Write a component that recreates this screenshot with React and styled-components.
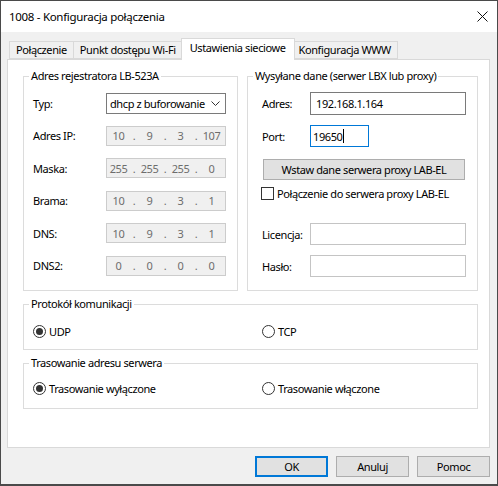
import React from "react";
import styled, { createGlobalStyle } from "styled-components";

const GlobalStyle = createGlobalStyle`
  html, body { margin: 0; padding: 0; background: #ffffff; }
  body {
    font-family: "Noto Sans", "Segoe UI", "Liberation Sans", sans-serif;
    font-size: 11px;
    letter-spacing: -0.4px;
    color: #000;
  }
  * { box-sizing: border-box; }
`;

const Window = styled.div`
  width: 498px;
  height: 486px;
  border: 1px solid #4a4a4a;
  border-bottom-width: 2px;
  background: #f0f0f0;
  display: flex;
  flex-direction: column;
`;

const TitleBar = styled.div`
  height: 31px;
  flex: none;
  background: #ffffff;
  display: flex;
  align-items: center;
  justify-content: space-between;
  padding: 0 9px 0 8px;
  font-size: 11.5px;
  letter-spacing: -0.3px;
`;

const Body = styled.div`
  flex: 1;
  display: flex;
  flex-direction: column;
  padding: 6px 7px 0 6px;
`;

const TabStrip = styled.div`
  display: flex;
  align-items: flex-end;
  height: 21px;
  padding-left: 2px;
  position: relative;
  z-index: 1;
`;

const Tab = styled.div`
  height: ${(p) => (p.$active ? "22px" : "18px")};
  margin: ${(p) => (p.$active ? "0 -2px -1px -2px" : "0 0 0 -1px")};
  padding: ${(p) => (p.$active ? "2px 8px 0 8px" : "1px 6px 0 6px")};
  background: ${(p) => (p.$active ? "#ffffff" : "#f0f0f0")};
  border: 1px solid #d9d9d9;
  border-bottom: ${(p) => (p.$active ? "none" : "1px solid #d9d9d9")};
  position: relative;
  z-index: ${(p) => (p.$active ? 2 : 0)};
  white-space: nowrap;
  line-height: 14px;
  &:first-child { margin-left: 0; }
`;

const Panel = styled.div`
  height: 389px;
  flex: none;
  background: #ffffff;
  border: 1px solid #d9d9d9;
  padding: 9px 11px 0 15px;
  display: flex;
  flex-direction: column;
  gap: 6px;
`;

const TopGrid = styled.div`
  display: grid;
  grid-template-columns: 215px 231px;
  column-gap: 9px;
`;

const Group = styled.fieldset`
  margin: 0;
  padding: 0;
  min-width: 0;
  border: 1px solid #dcdcdc;
  height: ${(p) => p.$h}px;
`;

const Legend = styled.legend`
  margin-left: 5px;
  padding: 0 2px;
  line-height: 14px;
  height: 14px;
`;

const GroupInner = styled.div`
  padding: ${(p) => p.$pt}px 0 0 ${(p) => p.$pl}px;
`;

const FieldRow = styled.div`
  display: grid;
  grid-template-columns: ${(p) => p.$label}px auto;
  align-items: center;
  height: ${(p) => p.$h}px;
  margin-bottom: ${(p) => p.$mb || 0}px;
  margin-top: ${(p) => p.$mt || 0}px;
`;

const Label = styled.span`
  white-space: nowrap;
`;

const Select = styled.div`
  width: 120px;
  height: 21px;
  border: 1px solid #7a7a7a;
  background: #fff;
  display: flex;
  align-items: center;
  padding: 0 5px 0 3px;
  justify-content: space-between;
`;

const SelectText = styled.span`
  width: 96px;
  overflow: hidden;
  white-space: nowrap;
`;

const IpField = styled.div`
  width: 120px;
  height: 20px;
  border: 1px solid #cccccc;
  background: #f0f0f0;
  color: #6d6d6d;
  display: flex;
  align-items: center;
  padding-left: 0;
`;

const IpSeg = styled.span`
  width: 23px;
  text-align: center;
`;

const IpDot = styled.span`
  width: 8px;
  text-align: center;
`;

const TextBox = styled.div`
  width: ${(p) => p.$w}px;
  height: ${(p) => p.$h}px;
  border: 1px solid ${(p) => p.$border};
  background: #fff;
  display: flex;
  align-items: center;
  padding-left: ${(p) => p.$pl || 3}px;
  white-space: nowrap;
`;

const Caret = styled.span`
  display: inline-block;
  width: 1px;
  height: 14px;
  background: #000;
  margin-left: 1px;
`;

const PushButton = styled.div`
  width: ${(p) => p.$w}px;
  height: 21px;
  background: #e1e1e1;
  border: 1px solid ${(p) => (p.$default ? "#0078d7" : "#adadad")};
  box-shadow: ${(p) => (p.$default ? "inset 0 0 0 1px #0078d7" : "none")};
  display: flex;
  align-items: center;
  justify-content: center;
  margin-left: ${(p) => p.$ml || 0}px;
  margin-top: ${(p) => p.$mt || 0}px;
  white-space: nowrap;
`;

const CheckRow = styled.div`
  display: flex;
  align-items: center;
  gap: 3px;
  height: 13px;
  margin-top: ${(p) => p.$mt}px;
  margin-left: -1px;
`;

const CheckBox = styled.span`
  width: 13px;
  height: 13px;
  border: 1px solid #333333;
  background: #fff;
  flex: none;
`;

const RadioRow = styled.div`
  display: grid;
  grid-template-columns: 229px auto;
  height: 13px;
  align-items: center;
`;

const RadioItem = styled.div`
  display: flex;
  align-items: center;
  gap: 3px;
`;

const RadioCircle = styled.span`
  width: 13px;
  height: 13px;
  border-radius: 50%;
  border: 1px solid #333333;
  background: #fff;
  display: flex;
  align-items: center;
  justify-content: center;
  flex: none;
  &::after {
    content: "";
    width: 7px;
    height: 7px;
    border-radius: 50%;
    background: ${(p) => (p.$checked ? "#333333" : "transparent")};
  }
`;

const ButtonRow = styled.div`
  display: flex;
  justify-content: flex-end;
  gap: 8px;
  margin-top: 8px;
`;

const Ip = ({ parts }) => (
  <IpField>
    <IpSeg>{parts[0]}</IpSeg>
    <IpDot>.</IpDot>
    <IpSeg>{parts[1]}</IpSeg>
    <IpDot>.</IpDot>
    <IpSeg>{parts[2]}</IpSeg>
    <IpDot>.</IpDot>
    <IpSeg>{parts[3]}</IpSeg>
  </IpField>
);

const Radio = ({ checked, children }) => (
  <RadioItem>
    <RadioCircle $checked={checked} />
    <span>{children}</span>
  </RadioItem>
);

export default function App() {
  return (
    <>
      <GlobalStyle />
      <Window>
        <TitleBar>
          <span>1008 - Konfiguracja połączenia</span>
          <svg width="11" height="11" viewBox="0 0 11 11">
            <path d="M0.5 0.5 L10.5 10.5 M10.5 0.5 L0.5 10.5" stroke="#111" strokeWidth="1" fill="none" />
          </svg>
        </TitleBar>
        <Body>
          <TabStrip>
            <Tab>Połączenie</Tab>
            <Tab>Punkt dostępu Wi-Fi</Tab>
            <Tab $active>Ustawienia sieciowe</Tab>
            <Tab>Konfiguracja WWW</Tab>
          </TabStrip>
          <Panel>
            <TopGrid>
              <Group $h={222}>
                <Legend>Adres rejestratora LB-523A</Legend>
                <GroupInner $pt={10} $pl={9}>
                  <FieldRow $label={73} $h={21} $mb={11.5}>
                    <Label>Typ:</Label>
                    <Select>
                      <SelectText>dhcp z buforowanie</SelectText>
                      <svg width="9" height="5" viewBox="0 0 9 5">
                        <polyline points="0.5,0.5 4.5,4.5 8.5,0.5" stroke="#333" strokeWidth="1" fill="none" />
                      </svg>
                    </Select>
                  </FieldRow>
                  <FieldRow $label={73} $h={20} $mb={12.5}>
                    <Label>Adres IP:</Label>
                    <Ip parts={["10", "9", "3", "107"]} />
                  </FieldRow>
                  <FieldRow $label={73} $h={20} $mb={12.5}>
                    <Label>Maska:</Label>
                    <Ip parts={["255", "255", "255", "0"]} />
                  </FieldRow>
                  <FieldRow $label={73} $h={20} $mb={12.5}>
                    <Label>Brama:</Label>
                    <Ip parts={["10", "9", "3", "1"]} />
                  </FieldRow>
                  <FieldRow $label={73} $h={20} $mb={12.5}>
                    <Label>DNS:</Label>
                    <Ip parts={["10", "9", "3", "1"]} />
                  </FieldRow>
                  <FieldRow $label={73} $h={20}>
                    <Label>DNS2:</Label>
                    <Ip parts={["0", "0", "0", "0"]} />
                  </FieldRow>
                </GroupInner>
              </Group>
              <Group $h={222}>
                <Legend>Wysyłane dane (serwer LBX lub proxy)</Legend>
                <GroupInner $pt={9} $pl={14}>
                  <FieldRow $label={48} $h={23}>
                    <Label>Adres:</Label>
                    <TextBox $w={156} $h={23} $border="#7a7a7a" $pl={5}>192.168.1.164</TextBox>
                  </FieldRow>
                  <FieldRow $label={48} $h={22} $mt={10}>
                    <Label>Port:</Label>
                    <TextBox $w={59} $h={22} $border="#0078d7" $pl={2}>
                      19650<Caret />
                    </TextBox>
                  </FieldRow>
                  <PushButton $w={202} $ml={1} $mt={12}>Wstaw dane serwera proxy LAB-EL</PushButton>
                  <CheckRow $mt={7}>
                    <CheckBox />
                    <span>Połączenie do serwera proxy LAB-EL</span>
                  </CheckRow>
                  <FieldRow $label={48} $h={22} $mt={23}>
                    <Label>Licencja:</Label>
                    <TextBox $w={156} $h={22} $border="#c4c4c4" />
                  </FieldRow>
                  <FieldRow $label={48} $h={22} $mt={10}>
                    <Label>Hasło:</Label>
                    <TextBox $w={156} $h={22} $border="#c4c4c4" />
                  </FieldRow>
                </GroupInner>
              </Group>
            </TopGrid>
            <Group $h={53}>
              <Legend>Protokół komunikacji</Legend>
              <GroupInner $pt={13} $pl={9}>
                <RadioRow>
                  <Radio checked>UDP</Radio>
                  <Radio>TCP</Radio>
                </RadioRow>
              </GroupInner>
            </Group>
            <Group $h={53}>
              <Legend>Trasowanie adresu serwera</Legend>
              <GroupInner $pt={11} $pl={9}>
                <RadioRow>
                  <Radio checked>Trasowanie wyłączone</Radio>
                  <Radio>Trasowanie włączone</Radio>
                </RadioRow>
              </GroupInner>
            </Group>
          </Panel>
          <ButtonRow>
            <PushButton $w={73} $default>OK</PushButton>
            <PushButton $w={73}>Anuluj</PushButton>
            <PushButton $w={73}>Pomoc</PushButton>
          </ButtonRow>
        </Body>
      </Window>
    </>
  );
}
